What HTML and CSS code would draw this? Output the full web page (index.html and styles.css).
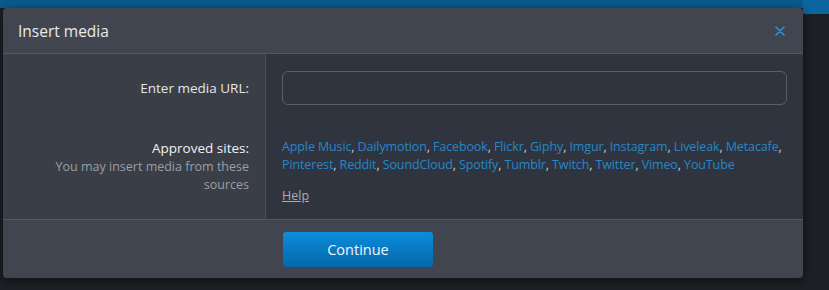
FILE: index.html
```html
<!DOCTYPE html>
<html lang="en">
<head>
    <meta charset="UTF-8">
    <meta name="viewport" content="width=device-width, initial-scale=1.0">
    <title>Insert media</title>
    <link rel="stylesheet" href="styles.css">
</head>
<body>
    <div class="page">
        <div class="page-bar"><span class="page-tab"></span></div>
    </div>

    <div class="overlay">
        <div class="dialog">
            <header class="dialog-head">
                <h2>Insert media</h2>
                <button type="button" class="close" aria-label="Close">
                    <svg width="10" height="10" viewBox="0 0 10 10">
                        <path d="M1 1L9 9M9 1L1 9" stroke="#2b92da" stroke-width="1.6" stroke-linecap="round"/>
                    </svg>
                </button>
            </header>

            <div class="dialog-body">
                <div class="row-label">
                    <label for="media-url">Enter media URL:</label>
                </div>
                <div class="row-value">
                    <input type="text" id="media-url" class="url-input" autofocus>
                </div>

                <div class="row-label">
                    <span class="label-main">Approved sites:</span>
                    <span class="hint">You may insert media from these sources</span>
                </div>
                <div class="row-value">
                    <p class="sites">
                        <a href="#">Apple Music</a>, <a href="#">Dailymotion</a>, <a href="#">Facebook</a>, <a href="#">Flickr</a>, <a href="#">Giphy</a>, <a href="#">Imgur</a>, <a href="#">Instagram</a>, <a href="#">Liveleak</a>, <a href="#">Metacafe</a>,<br>
                        <a href="#">Pinterest</a>, <a href="#">Reddit</a>, <a href="#">SoundCloud</a>, <a href="#">Spotify</a>, <a href="#">Tumblr</a>, <a href="#">Twitch</a>, <a href="#">Twitter</a>, <a href="#">Vimeo</a>, <a href="#">YouTube</a>
                    </p>
                    <a href="#" class="help">Help</a>
                </div>
            </div>

            <footer class="dialog-foot">
                <button type="button" class="btn-primary">Continue</button>
            </footer>
        </div>
    </div>
</body>
</html>
```

FILE: styles.css
```css
body {
    margin: 0;
    padding: 0;
    background-color: #1c1f25;
    font-family: "Open Sans", "Noto Sans", Arial, sans-serif;
    color: #e4e6e9;
}

.page {
    height: 290px;
}

.page-bar {
    height: 8px;
    background-color: #0a5a8e;
    position: relative;
}

.page-tab {
    position: absolute;
    right: 0;
    top: 0;
    width: 26px;
    height: 14px;
    background-color: #0b669f;
}

.overlay {
    position: absolute;
    left: 3px;
    top: 8px;
}

.dialog {
    width: 800px;
    background-color: #41454f;
    border-radius: 4px;
    box-shadow: 0 2px 10px rgba(0, 0, 0, 0.5);
    overflow: hidden;
}

.dialog-head {
    height: 45px;
    display: flex;
    align-items: center;
    justify-content: space-between;
    padding: 0 16px 0 15px;
    border-bottom: 1px solid #545862;
}

.dialog-head h2 {
    margin: 0;
    font-size: 15.5px;
    font-weight: 400;
    color: #e8eaed;
}

.close {
    background: none;
    border: none;
    padding: 0;
    width: 14px;
    height: 14px;
    display: flex;
    align-items: center;
    justify-content: center;
    cursor: pointer;
}

.dialog-body {
    display: grid;
    grid-template-columns: 263px 1fr;
    border-bottom: 1px solid #545862;
}

.row-label {
    background-color: #3a3e47;
    border-right: 1px solid #4a4e58;
    padding: 17px 16px 0 0;
    text-align: right;
    font-size: 13.5px;
}

.row-value {
    background-color: #30343e;
    padding: 17px 16px 0 16px;
}

.row-label:nth-child(1) {
    line-height: 34px;
    padding-bottom: 17px;
}

.row-label label {
    color: #e4e6e9;
}

.label-main {
    display: block;
    line-height: 18px;
    color: #f0f2f4;
}

.hint {
    display: block;
    padding-left: 40px;
    margin-top: 1px;
    font-size: 12.5px;
    line-height: 18px;
    color: #9a9ea6;
}

.url-input {
    display: block;
    box-sizing: border-box;
    width: 100%;
    height: 34px;
    background-color: #30343e;
    border: 1px solid #5a5e68;
    border-radius: 6px;
    padding: 0 7px;
    color: #fff;
    caret-color: #fff;
    font-size: 14px;
    outline: none;
}

.row-value:nth-child(4) {
    padding-top: 16px;
    padding-bottom: 14px;
}

.sites {
    margin: 0;
    font-size: 12.5px;
    line-height: 18px;
    letter-spacing: -0.12px;
    white-space: nowrap;
    color: #c9ccd1;
}

.sites a {
    color: #2687c9;
    text-decoration: none;
}

.help {
    display: inline-block;
    margin-top: 13px;
    font-size: 12.5px;
    line-height: 18px;
    color: #a9adb4;
}

.dialog-foot {
    height: 58px;
    padding: 12px 0 0 280px;
    box-sizing: border-box;
}

.btn-primary {
    width: 150px;
    height: 35px;
    border: none;
    border-radius: 3px;
    background: linear-gradient(#0b8ddb, #0567aa);
    color: #f2f6fa;
    font-family: inherit;
    font-size: 14.5px;
    cursor: pointer;
}
```
